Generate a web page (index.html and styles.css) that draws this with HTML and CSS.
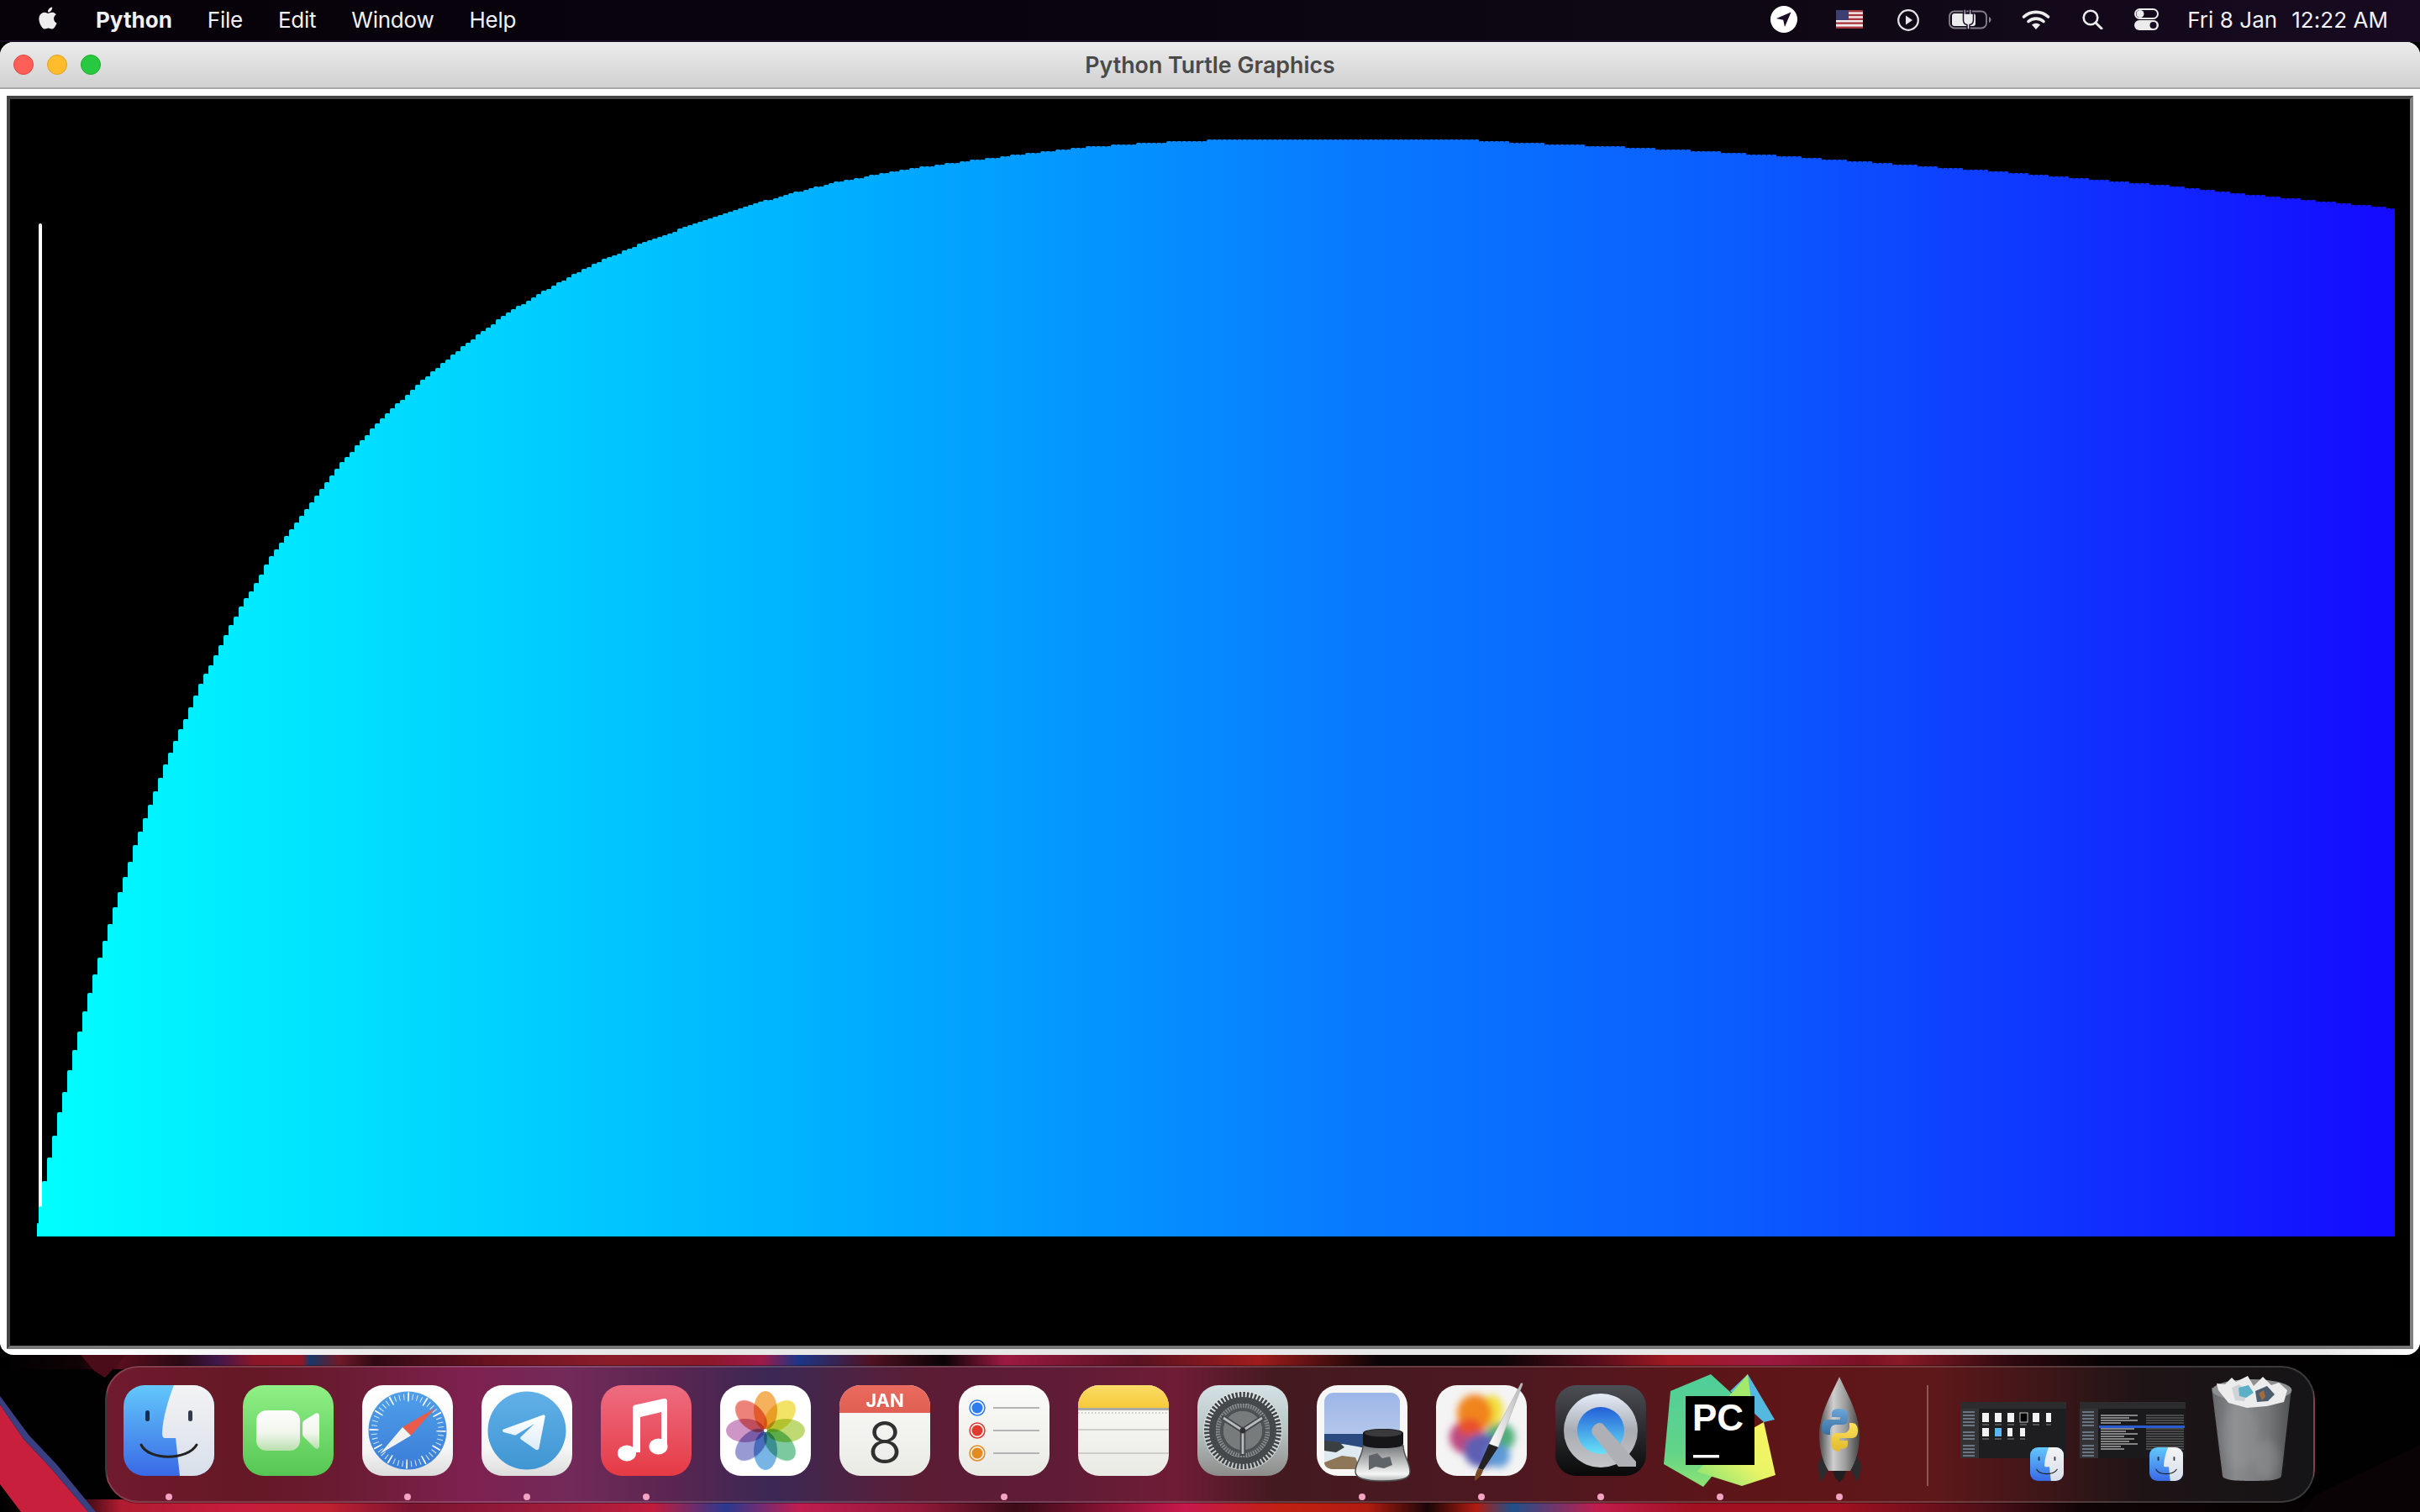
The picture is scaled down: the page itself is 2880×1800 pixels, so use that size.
FILE: index.html
```html
<!DOCTYPE html>
<html lang="en">
<head>
<meta charset="utf-8">
<title>Python Turtle Graphics</title>
<link rel="stylesheet" href="styles.css">
</head>
<body>
<svg class="defs" width="0" height="0" aria-hidden="true">
  <defs>
    <linearGradient id="gFinderL" x1="0" y1="0" x2="0" y2="1"><stop offset="0" stop-color="#63c8fb"/><stop offset="1" stop-color="#3969e6"/></linearGradient>
    <linearGradient id="gFinderR" x1="0" y1="0" x2="0" y2="1"><stop offset="0" stop-color="#f3f3f4"/><stop offset="1" stop-color="#d8dfea"/></linearGradient>
    <linearGradient id="gFT" x1="0" y1="0" x2="0" y2="1"><stop offset="0" stop-color="#90f086"/><stop offset="1" stop-color="#55c653"/></linearGradient>
    <linearGradient id="gFTw" x1="0" y1="0" x2="0" y2="1"><stop offset="0" stop-color="#fdfdfb"/><stop offset=".55" stop-color="#f2f6ee"/><stop offset="1" stop-color="#b9dfae"/></linearGradient>
    <linearGradient id="gWhite" x1="0" y1="0" x2="0" y2="1"><stop offset="0" stop-color="#ffffff"/><stop offset=".7" stop-color="#f6f6f6"/><stop offset="1" stop-color="#dcdcdc"/></linearGradient>
    <linearGradient id="gSafari" x1="0" y1="0" x2="0" y2="1"><stop offset="0" stop-color="#4f9fe9"/><stop offset="1" stop-color="#3b7dd8"/></linearGradient>
    <linearGradient id="gTg" x1="0" y1="0" x2="0" y2="1"><stop offset="0" stop-color="#62b0e8"/><stop offset="1" stop-color="#3f96d2"/></linearGradient>
    <linearGradient id="gPlane" x1="0" y1="0" x2="0" y2="1"><stop offset="0" stop-color="#ffffff"/><stop offset="1" stop-color="#dcecf8"/></linearGradient>
    <linearGradient id="gMusic" x1="0" y1="0" x2="0" y2="1"><stop offset="0" stop-color="#ee6c80"/><stop offset="1" stop-color="#e63a45"/></linearGradient>
    <linearGradient id="gCal" x1="0" y1="0" x2="0" y2="1"><stop offset="0" stop-color="#ea6c5e"/><stop offset="1" stop-color="#df5f52"/></linearGradient>
    <linearGradient id="gPaper" x1="0" y1="0" x2="0" y2="1"><stop offset="0" stop-color="#fbfbf9"/><stop offset="1" stop-color="#eaeae5"/></linearGradient>
    <linearGradient id="gNoteY" x1="0" y1="0" x2="0" y2="1"><stop offset="0" stop-color="#fbdc66"/><stop offset="1" stop-color="#f6c93a"/></linearGradient>
    <linearGradient id="gSys" x1="0" y1="0" x2="0" y2="1"><stop offset="0" stop-color="#d5e2e5"/><stop offset=".5" stop-color="#b9c3c4"/><stop offset="1" stop-color="#8c8c8a"/></linearGradient>
    <linearGradient id="gSky" x1="0" y1="0" x2="0" y2="1"><stop offset="0" stop-color="#9db6e8"/><stop offset="1" stop-color="#b4c6ea"/></linearGradient>
    <linearGradient id="gJar" x1="0" y1="0" x2="0" y2="1"><stop offset="0" stop-color="#75787a"/><stop offset=".5" stop-color="#c4c6c6"/><stop offset=".8" stop-color="#f5f5f5"/><stop offset="1" stop-color="#b5b6b7"/></linearGradient>
    <linearGradient id="gBrush" x1="0" y1="0" x2="1" y2="0"><stop offset="0" stop-color="#ffffff"/><stop offset="1" stop-color="#b8b8b8"/></linearGradient>
    <linearGradient id="gQT" x1="0" y1="0" x2="0" y2="1"><stop offset="0" stop-color="#4b4e54"/><stop offset="1" stop-color="#090909"/></linearGradient>
    <linearGradient id="gQTr" x1="0" y1="0" x2="0" y2="1"><stop offset="0" stop-color="#e4edfa"/><stop offset=".5" stop-color="#a9acb2"/><stop offset="1" stop-color="#c3c5c8"/></linearGradient>
    <linearGradient id="gQTb" x1="0" y1="0" x2="0" y2="1"><stop offset="0" stop-color="#235fd8"/><stop offset="1" stop-color="#68e3f8"/></linearGradient>
    <linearGradient id="gPyG" x1="0" y1="0" x2="0" y2="1"><stop offset="0" stop-color="#4fce9a"/><stop offset=".7" stop-color="#62d488"/><stop offset="1" stop-color="#8ee372"/></linearGradient>
    <linearGradient id="gPyY" x1="0" y1="1" x2="1" y2="0"><stop offset="0" stop-color="#7fe274"/><stop offset=".5" stop-color="#e8f468"/><stop offset="1" stop-color="#fcf45f"/></linearGradient>
    <linearGradient id="gRocket" x1="0" y1="0" x2="1" y2="0"><stop offset="0" stop-color="#4c4c4c"/><stop offset=".35" stop-color="#cfcfcf"/><stop offset=".65" stop-color="#9c9c9c"/><stop offset="1" stop-color="#454545"/></linearGradient>
    <linearGradient id="gPyB" x1="0" y1="0" x2="0" y2="1"><stop offset="0" stop-color="#6aa6d8"/><stop offset="1" stop-color="#386f9f"/></linearGradient>
    <linearGradient id="gPyO" x1="0" y1="0" x2="0" y2="1"><stop offset="0" stop-color="#ffe15c"/><stop offset="1" stop-color="#e0b92f"/></linearGradient>
    <linearGradient id="gTrash" x1="0" y1="0" x2="1" y2="0"><stop offset="0" stop-color="#66676a"/><stop offset=".3" stop-color="#898a8c"/><stop offset=".7" stop-color="#77787a"/><stop offset="1" stop-color="#505153"/></linearGradient>
    <linearGradient id="gStripT" x1="0" y1="0" x2="1" y2="0">
      <stop offset="0" stop-color="#000"/><stop offset=".033" stop-color="#100306"/><stop offset=".05" stop-color="#5a0e1c"/><stop offset=".075" stop-color="#2a0a14"/><stop offset=".09" stop-color="#40184a"/><stop offset=".105" stop-color="#8a1628"/><stop offset=".125" stop-color="#8f1828"/><stop offset=".128" stop-color="#16386a"/><stop offset=".14" stop-color="#701a28"/><stop offset=".155" stop-color="#300a14"/><stop offset=".2" stop-color="#661220"/><stop offset=".25" stop-color="#8a1c2a"/><stop offset=".29" stop-color="#8a1828"/><stop offset=".315" stop-color="#9c1a48"/><stop offset=".33" stop-color="#1c3688"/><stop offset=".36" stop-color="#501222"/><stop offset=".39" stop-color="#0a0306"/><stop offset=".415" stop-color="#9c1a42"/><stop offset=".47" stop-color="#581222"/><stop offset=".52" stop-color="#a01c1c"/><stop offset=".57" stop-color="#0a0406"/><stop offset=".62" stop-color="#0a0406"/><stop offset=".66" stop-color="#580e1c"/><stop offset=".69" stop-color="#a01a22"/><stop offset=".73" stop-color="#9c1a40"/><stop offset=".77" stop-color="#781224"/><stop offset=".785" stop-color="#881a26"/><stop offset=".83" stop-color="#300a10"/><stop offset=".87" stop-color="#060203"/><stop offset="1" stop-color="#000"/>
    </linearGradient>
    <linearGradient id="gStripB" x1="0" y1="0" x2="1" y2="0">
      <stop offset="0" stop-color="#000"/><stop offset=".035" stop-color="#3a0a14"/><stop offset=".05" stop-color="#b01c30"/><stop offset=".1" stop-color="#c81c3c"/><stop offset=".135" stop-color="#c02030"/><stop offset=".17" stop-color="#7a1430"/><stop offset=".23" stop-color="#a01c3c"/><stop offset=".27" stop-color="#c01c3c"/><stop offset=".3" stop-color="#2a3a90"/><stop offset=".33" stop-color="#c01c50"/><stop offset=".38" stop-color="#901838"/><stop offset=".42" stop-color="#3a0c18"/><stop offset=".49" stop-color="#c8184c"/><stop offset=".53" stop-color="#c02010"/><stop offset=".565" stop-color="#b01c10"/><stop offset=".59" stop-color="#1a0608"/><stop offset=".61" stop-color="#b01c10"/><stop offset=".625" stop-color="#20508a"/><stop offset=".66" stop-color="#c01c4c"/><stop offset=".7" stop-color="#a01020"/><stop offset=".76" stop-color="#a01020"/><stop offset=".82" stop-color="#501018"/><stop offset=".86" stop-color="#100406"/><stop offset="1" stop-color="#000"/>
    </linearGradient>
    <filter id="fBlob" x="-30%" y="-30%" width="160%" height="160%"><feGaussianBlur stdDeviation="4"/></filter>
    <symbol id="finderIcon" viewBox="0 0 108 108">
      <rect width="108" height="108" rx="25" fill="url(#gFinderL)"/>
      <path d="M60 0H83a25 25 0 0 1 25 25V83a25 25 0 0 1-25 25H67L62 63H50c-3 0-4-2-4-6C47 38 53 18 60 0Z" fill="url(#gFinderR)"/>
      <rect x="26" y="30" width="5" height="13" rx="2.5" fill="#1d2b45"/>
      <rect x="77" y="30" width="5" height="13" rx="2.5" fill="#333b4a"/>
      <path d="M21 71C30 90 76 90 87 71" fill="none" stroke="#222" stroke-width="3" stroke-linecap="round"/>
    </symbol>
  </defs>
</svg>

<svg class="wallpaper" viewBox="0 0 2880 1800" aria-hidden="true">
  <rect width="2880" height="1800" fill="#020102"/>
  <rect y="1610" width="2880" height="20" fill="url(#gStripT)"/>
  <rect y="1785" width="2880" height="15" fill="url(#gStripB)"/>
  <polygon points="0,1672 28,1713 60,1747 105,1800 25,1800 0,1767" fill="#c8203c"/>
  <polygon points="28,1713 60,1747 105,1800 114,1800 68,1744 34,1708 0,1662 0,1672" fill="#3a3f80"/>
  <polygon points="96,1613 150,1613 125,1640 112,1632" fill="#4a0c18"/>
  <polygon points="2755,1780 2880,1720 2880,1800 2740,1800" fill="#0a0305"/>
  <rect y="48" width="2880" height="2" fill="#1a0f25"/>
</svg>

<header class="menubar">
  <nav class="menu-left">
    <svg class="apple" viewBox="0 0 24 24"><path d="M12.152 6.896c-.948 0-2.415-1.078-3.96-1.04-2.04.027-3.91 1.183-4.961 3.014-2.117 3.675-.546 9.103 1.519 12.09 1.013 1.454 2.208 3.09 3.792 3.039 1.52-.065 2.09-.987 3.935-.987 1.831 0 2.35.987 3.96.948 1.637-.026 2.676-1.48 3.676-2.948 1.156-1.688 1.636-3.325 1.662-3.415-.039-.013-3.182-1.221-3.22-4.857-.026-3.04 2.48-4.494 2.597-4.559-1.429-2.09-3.623-2.324-4.39-2.376-2-.156-3.675 1.09-4.61 1.09zM15.53 3.83c.843-1.012 1.4-2.427 1.245-3.83-1.207.052-2.662.805-3.532 1.818-.78.896-1.454 2.338-1.273 3.714 1.338.104 2.715-.688 3.559-1.701"/></svg>
    <span class="menu-app">Python</span>
    <span class="menu-item">File</span>
    <span class="menu-item">Edit</span>
    <span class="menu-item">Window</span>
    <span class="menu-item">Help</span>
  </nav>
  <div class="menu-right">
    <svg class="st st-loc" viewBox="0 0 32 32"><circle cx="16" cy="16" r="16" fill="#fff"/><path d="M24.5 7.5 7 15l8.2 1.8L17 25z" fill="#1a0c24"/></svg>
    <svg class="st st-flag" viewBox="0 0 32 22"><rect width="32" height="22" fill="#f3ecec"/><g fill="#a8363c"><rect width="32" height="2.4" y="0"/><rect width="32" height="2.4" y="4.8"/><rect width="32" height="2.4" y="9.6"/><rect width="32" height="2.4" y="14.4"/><rect width="32" height="2.4" y="19.6"/></g><rect width="15" height="12" fill="#3d3f72"/></svg>
    <svg class="st st-play" viewBox="0 0 26 26"><circle cx="13" cy="13" r="11.8" fill="none" stroke="#e6e4e8" stroke-width="2.2"/><path d="M10 7.5v11l8-5.5z" fill="#e6e4e8"/></svg>
    <svg class="st st-batt" viewBox="0 0 51 24"><rect x="1" y="2.5" width="44" height="20" rx="6" fill="none" stroke="#85818a" stroke-width="1.8"/><path d="M48 9v7c1.5-.5 2.5-2 2.5-3.5S49.500 9.500 48 9z" fill="#85818a"/><rect x="4" y="5" width="28" height="15" rx="3" fill="#ececec"/><path d="M18 0h2.500v5h4V0H27v5h2.500v8c0 3-2 5-4.500 5.500V24h-3v-5.500C19.500 18 17.500 16 17.500 13V5H18z" fill="#ececec" stroke="#1a0c24" stroke-width="1.500"/></svg>
    <svg class="st st-wifi" viewBox="0 0 34 24"><g fill="none" stroke="#ececec" stroke-width="3.600" stroke-linecap="round"><path d="M2.500 9C10.500 1.500 23.500 1.500 31.500 9"/><path d="M8 14.500c5-4.500 13-4.500 18 0"/></g><path d="M17 24l-5-5.500c3-2.500 7-2.500 10 0z" fill="#ececec"/></svg>
    <svg class="st st-search" viewBox="0 0 25 24"><circle cx="10" cy="10" r="8.300" fill="none" stroke="#ececec" stroke-width="2.600"/><path d="M16 16l7 7" stroke="#ececec" stroke-width="3" stroke-linecap="round"/></svg>
    <svg class="st st-cc" viewBox="0 0 29 26"><rect x="1" y="1" width="27" height="11" rx="5.500" fill="none" stroke="#ececec" stroke-width="2"/><circle cx="7" cy="6.500" r="4.500" fill="#ececec"/><rect y="14" width="29" height="12" rx="6" fill="#ececec"/><circle cx="22.500" cy="20" r="4" fill="#1a0c24"/></svg>
    <span class="clock clock-date">Fri 8 Jan</span>
    <span class="clock clock-time">12:22 AM</span>
  </div>
</header>

<main class="desktop">
  <section class="window">
    <div class="titlebar">
      <div class="lights">
        <i class="light light-close"></i><i class="light light-min"></i><i class="light light-max"></i>
      </div>
      <h1 class="title">Python Turtle Graphics</h1>
      <span></span>
    </div>
    <div class="content">
      <div class="sunken"><canvas id="turtle" class="turtle" width="2856" height="1484"></canvas></div>
    </div>
  </section>

  <footer class="dock">
    <div class="app">
      <svg class="icon" viewBox="0 0 108 108"><use href="#finderIcon"/></svg><i class="dot on"></i>
    </div>
    <div class="app">
      <svg class="icon" viewBox="0 0 108 108">
        <rect width="108" height="108" rx="25" fill="url(#gFT)"/>
        <rect x="16" y="30" width="52" height="48" rx="12" fill="url(#gFTw)"/>
        <path d="M71 46c0-2 1-3 2-4l13-8c3-2 5 0 5 3v35c0 3-2 5-5 3L73 62c-1-1-2-2-2-4z" fill="url(#gFTw)"/>
      </svg><i class="dot"></i>
    </div>
    <div class="app">
      <svg class="icon" viewBox="0 0 108 108">
        <rect width="108" height="108" rx="25" fill="url(#gWhite)"/>
        <circle cx="54" cy="54" r="46.500" fill="url(#gSafari)"/>
        <circle cx="54" cy="54" r="40" fill="none" stroke="#dcebfa" stroke-width="7" stroke-dasharray="1 4.240"/>
        <circle cx="54" cy="54" r="40" fill="none" stroke="#fff" stroke-width="11" stroke-dasharray="1.600 19.340"/>
        <polygon points="87,27 48,50 58,60" fill="#e95b4a"/>
        <polygon points="21,82 48,50 58,60" fill="#f2f2f2"/>
      </svg><i class="dot on"></i>
    </div>
    <div class="app">
      <svg class="icon" viewBox="0 0 108 108">
        <rect width="108" height="108" rx="25" fill="url(#gWhite)"/>
        <circle cx="54" cy="54" r="46.500" fill="url(#gTg)"/>
        <path d="M73 35.500c1.500-.6 3 .5 2.700 2.200L68.500 75c-.4 2-2.500 2.800-4 1.700L47 64.500c-1-.8-1-1.800-.2-2.700L63 46 41.500 59c-1 .6-2 .7-3 .3L26.500 56c-1.800-.6-2-2.600-.2-3.400z" fill="url(#gPlane)"/>
      </svg><i class="dot on"></i>
    </div>
    <div class="app">
      <svg class="icon" viewBox="0 0 108 108">
        <rect width="108" height="108" rx="25" fill="url(#gMusic)"/>
        <path d="M38 27c0-2 1-3 3-3.500L75 16c2.500-.5 4 .5 4 3V72H72V32L47 38V80H38z" fill="#fff"/>
        <ellipse cx="31" cy="81" rx="11" ry="9.500" fill="#fff"/>
        <ellipse cx="68.500" cy="73" rx="11" ry="9.500" fill="#fff"/>
      </svg><i class="dot on"></i>
    </div>
    <div class="app">
      <svg class="icon" viewBox="0 0 108 108">
        <rect width="108" height="108" rx="25" fill="#fff"/>
        <g class="petals">
          <ellipse cx="54" cy="30" rx="14" ry="23" fill="#f3a33d"/>
          <ellipse cx="54" cy="30" rx="14" ry="23" fill="#f0de4b" transform="rotate(45 54 54)"/>
          <ellipse cx="54" cy="30" rx="14" ry="23" fill="#b3d45a" transform="rotate(90 54 54)"/>
          <ellipse cx="54" cy="30" rx="14" ry="23" fill="#64bf8e" transform="rotate(135 54 54)"/>
          <ellipse cx="54" cy="30" rx="14" ry="23" fill="#5fa8df" transform="rotate(180 54 54)"/>
          <ellipse cx="54" cy="30" rx="14" ry="23" fill="#8588cb" transform="rotate(225 54 54)"/>
          <ellipse cx="54" cy="30" rx="14" ry="23" fill="#c483bd" transform="rotate(270 54 54)"/>
          <ellipse cx="54" cy="30" rx="14" ry="23" fill="#ea6c60" transform="rotate(315 54 54)"/>
        </g>
        <circle cx="54" cy="54" r="2" fill="#fff"/>
      </svg><i class="dot"></i>
    </div>
    <div class="app">
      <svg class="icon" viewBox="0 0 108 108">
        <rect width="108" height="108" rx="25" fill="url(#gPaper)"/>
        <path d="M0 33V25A25 25 0 0 1 25 0H83a25 25 0 0 1 25 25V33z" fill="url(#gCal)"/>
        <text x="54" y="26" class="cal-month">JAN</text>
        <text x="54" y="93" class="cal-day">8</text>
      </svg><i class="dot"></i>
    </div>
    <div class="app">
      <svg class="icon" viewBox="0 0 108 108">
        <rect width="108" height="108" rx="25" fill="url(#gPaper)"/>
        <circle cx="22" cy="27" r="6.500" fill="#2f7bf0"/><circle cx="22" cy="27" r="9" fill="none" stroke="#2f7bf0" stroke-width="1.500"/>
        <circle cx="22" cy="54" r="6.500" fill="#e0392f"/><circle cx="22" cy="54" r="9" fill="none" stroke="#e0392f" stroke-width="1.500"/>
        <circle cx="22" cy="81" r="6.500" fill="#e38b1f"/><circle cx="22" cy="81" r="9" fill="none" stroke="#e38b1f" stroke-width="1.500"/>
        <path d="M41 27H96M41 54H96M41 81H96" stroke="#b4b4b4" stroke-width="2"/>
      </svg><i class="dot on"></i>
    </div>
    <div class="app">
      <svg class="icon" viewBox="0 0 108 108">
        <rect width="108" height="108" rx="25" fill="url(#gPaper)"/>
        <path d="M0 27V25A25 25 0 0 1 25 0H83a25 25 0 0 1 25 25V27z" fill="url(#gNoteY)"/>
        <rect y="27" width="108" height="3" fill="#a9a9a5"/>
        <path d="M0 33H108" stroke="#bdbdb8" stroke-width="1.500" stroke-dasharray="1.500 2.500"/>
        <path d="M0 53H108M0 81H108" stroke="#cfcfca" stroke-width="1.800"/>
      </svg><i class="dot"></i>
    </div>
    <div class="app">
      <svg class="icon" viewBox="0 0 108 108">
        <rect width="108" height="108" rx="25" fill="url(#gSys)"/>
        <circle cx="54" cy="54" r="47" fill="#e4e8e8" opacity=".6"/>
        <circle cx="54" cy="54" r="40" fill="none" stroke="#3e4244" stroke-width="12" stroke-dasharray="2.300 1.890"/>
        <circle cx="54" cy="54" r="36" fill="none" stroke="#45494b" stroke-width="8"/>
        <circle cx="54" cy="54" r="32" fill="#8a8e8f"/>
        <circle cx="54" cy="54" r="29" fill="none" stroke="#4f5355" stroke-width="6" stroke-dasharray="1.500 1.500"/>
        <circle cx="54" cy="54" r="25" fill="none" stroke="#4d5153" stroke-width="4"/>
        <circle cx="54" cy="54" r="23" fill="#777b7c"/>
        <path d="M54 54 54 84M54 54 29 38M54 54 79 38" stroke="#45484a" stroke-width="6.500"/>
        <path d="M54 54 54 82M54 54 31 39M54 54 77 39" stroke="#b9bcbc" stroke-width="2.800"/>
        <circle cx="54" cy="54" r="3.500" fill="#2f3133"/>
      </svg><i class="dot"></i>
    </div>
    <div class="app">
      <svg class="icon" viewBox="0 0 108 108">
        <rect width="108" height="108" rx="25" fill="#f7f7f5"/>
        <path d="M9 20A11 11 0 0 1 20 9H88A11 11 0 0 1 99 20V58H9z" fill="url(#gSky)"/>
        <path d="M9 58H99V90A11 11 0 0 1 88 100H20A11 11 0 0 1 9 90z" fill="#2b4a80"/>
        <path d="M9 72c15-6 30 0 60 5l30 3v12H9z" fill="#dfeaf0"/>
        <path d="M9 66l18 2 6 6-10 6-14-2z" fill="#3c3f42"/>
        <path d="M9 92 30 84l16 2 6 14H20c-6 0-11-3-11-8z" fill="#8f7658"/>
        <path d="M55 72h48c0 12 8 20 8 31 0 8-10 11-32 11s-33-3-33-11c0-11 9-19 9-31z" fill="url(#gJar)" stroke="#4d4f51" stroke-width="1.400"/>
        <path d="M62 84l10-3 6 6 9-2 3 10-10 4-10-2-8 4z" fill="#5f6468"/>
        <path d="M55 57c0-3 10-5 24-5s24 2 24 5V70c0 3-10 5-24 5s-24-2-24-5z" fill="#161618"/>
        <ellipse cx="79" cy="57" rx="22" ry="4.500" fill="#3a3a3c"/>
      </svg><i class="dot on"></i>
    </div>
    <div class="app">
      <svg class="icon" viewBox="0 0 108 108">
        <rect width="108" height="108" rx="25" fill="#f4f4f4"/>
        <g filter="url(#fBlob)">
          <ellipse cx="37" cy="62" rx="21" ry="20" fill="#bc4a80"/>
          <ellipse cx="76" cy="62" rx="18" ry="17" fill="#4fae78"/>
          <ellipse cx="55" cy="78" rx="22" ry="20" fill="#5d5fb3"/>
          <ellipse cx="74" cy="84" rx="14" ry="14" fill="#5f9ad6"/>
          <ellipse cx="66" cy="30" rx="14" ry="18" fill="#f2e03e"/>
          <ellipse cx="46" cy="34" rx="21" ry="23" fill="#f1841a"/>
          <ellipse cx="40" cy="50" rx="14" ry="10" fill="#e8502c"/>
        </g>
        <path d="M100 0c1-3 3-3 3-1L74 74 63 70z" fill="url(#gBrush)" stroke="#b0b0b0" stroke-width=".6"/>
        <path d="M63 70l11 4-18 27-6-2z" fill="#222224"/>
        <path d="M50 99l6 2c-1 5-4 9-10 13 0-5 1-10 4-15z" fill="#7a4a26"/>
      </svg><i class="dot on"></i>
    </div>
    <div class="app">
      <svg class="icon" viewBox="0 0 108 108">
        <rect width="108" height="108" rx="25" fill="url(#gQT)"/>
        <circle cx="54" cy="54" r="44" fill="url(#gQTr)"/>
        <circle cx="54" cy="54" r="28" fill="url(#gQTb)"/>
        <path d="M44 58c-2-4 0-9 5-12 4-2 7-1 9 2l38 43v6H75z" fill="#aeb0b5"/>
      </svg><i class="dot on"></i>
    </div>
    <div class="app">
      <svg class="icon" viewBox="0 0 108 108">
        <polygon points="87,-13 66,7 106,44 119,41 103,14" fill="#55b9df"/>
        <polygon points="43,-13 -5,7 -13,94 34,121 60,90 90,30" fill="url(#gPyG)"/>
        <polygon points="87,-13 50,30 94,42" fill="#a3e96c"/>
        <polygon points="106,44 120,107 80,120 26,103 60,70" fill="url(#gPyY)"/>
        <rect x="13" y="13" width="82" height="82"/>
        <text x="21" y="54" class="pc-text">PC</text>
        <rect x="22" y="83" width="31" height="3.500" fill="#fff"/>
      </svg><i class="dot on"></i>
    </div>
    <div class="app">
      <svg class="icon" viewBox="0 0 108 108">
        <path d="M34 80 28 96l4 20 8-14z" fill="#2c2c2e"/>
        <path d="M74 80l6 16-4 20-8-14z" fill="#2c2c2e"/>
        <path d="M54-10C46 8 30 34 30 60c0 16 4 30 11 42h26c7-12 11-26 11-42C78 34 62 8 54-10z" fill="url(#gRocket)"/>
        <path d="M54 28c-8 0-9 3-9 7v3h10v3H40c-5 0-7 4-7 9s2 9 7 9h3v-5c0-4 3-7 7-7h8c4 0 6-3 6-6V35c0-4-3-7-10-7z" fill="url(#gPyB)"/>
        <path d="M55 76c8 0 9-3 9-7v-3H54v-3h15c5 0 7-4 7-9s-2-9-7-9h-3v5c0 4-3 7-7 7h-8c-4 0-6 3-6 6v9c0 4 3 7 10 7z" fill="url(#gPyO)"/>
        <path d="M46 102h16l-3 8-5 6-5-6z" fill="#1f1f21"/>
      </svg><i class="dot on"></i>
    </div>
    <div class="dock-sep"></div>
    <div class="app">
      <svg class="icon" viewBox="0 0 108 108">
        <rect x="-9" y="20" width="126" height="67" rx="2" fill="#1e1e20"/>
        <rect x="-9" y="20" width="22" height="67" fill="#333335"/>
        <rect x="-9" y="20" width="126" height="8" fill="#2c2c2e"/>
        <path d="M-6 32H8M-6 36H8M-6 40H8M-6 44H8M-6 48H8M-6 56H8M-6 60H8M-6 64H8M-6 72H8M-6 76H8M-6 80H8M-6 84H8" stroke="#7f8a9a" stroke-width="1.300"/>
        <g fill="#f2f2f2"><rect x="17" y="33" width="8" height="11"/><rect x="32" y="33" width="8" height="11"/><rect x="47" y="33" width="8" height="11"/><rect x="77" y="33" width="8" height="11"/><rect x="93" y="33" width="6" height="11"/><rect x="17" y="51" width="8" height="10"/><rect x="47" y="51" width="6" height="10"/><rect x="62" y="51" width="6" height="10"/></g>
        <rect x="32" y="51" width="8" height="10" fill="#5ab6ee"/>
        <rect x="62" y="33" width="9" height="11" stroke="#ccc" fill="#000"/>
        <path d="M17 47H25M32 47H40M47 47H55M62 47H70M77 47H85M93 47H99M17 64H25M32 64H40M47 64H55M62 64H68" stroke="#888" stroke-width="1.200"/>
        <svg x="74" y="74" width="40" height="40" viewBox="0 0 108 108"><use href="#finderIcon"/></svg>
      </svg><i class="dot"></i>
    </div>
    <div class="app">
      <svg class="icon" viewBox="0 0 108 108">
        <rect x="-9" y="20" width="126" height="67" rx="2" fill="#1a1a1c"/>
        <rect x="-9" y="20" width="22" height="67" fill="#333335"/>
        <rect x="-9" y="20" width="126" height="8" fill="#2c2c2e"/>
        <path d="M-6 32H8M-6 36H8M-6 40H8M-6 44H8M-6 48H8M-6 56H8M-6 60H8M-6 64H8M-6 72H8M-6 76H8M-6 80H8M-6 84H8" stroke="#7f8a9a" stroke-width="1.300"/>
        <path d="M16 36H60M16 39H50M16 42H60M16 45H40M16 52H56M16 55H46M16 58H60M16 61H44M16 64H56M16 67H50M16 70H60M16 73H40M16 76H44" stroke="#a8a8a8" stroke-width="1.300"/>
        <path d="M70 36H115M70 39H115M70 42H115M70 45H115M70 52H115M70 55H115M70 58H115M70 61H115M70 64H115M70 67H115M70 70H115M70 73H115M70 76H115" stroke="#5a5a5a" stroke-width="1.300"/>
        <rect x="14" y="48" width="102" height="3" fill="#2a5bd0"/>
        <svg x="74" y="74" width="40" height="40" viewBox="0 0 108 108"><use href="#finderIcon"/></svg>
      </svg><i class="dot"></i>
    </div>
    <div class="app">
      <svg class="icon" viewBox="0 0 108 108">
        <path d="M6 3 19 108c1 5 15 6 35 6s34-1 35-6L101 3z" fill="url(#gTrash)"/>
        <ellipse cx="40" cy="60" rx="22" ry="40" fill="#a5a6a7" opacity=".25" filter="url(#fBlob)"/>
        <ellipse cx="72" cy="88" rx="16" ry="22" fill="#b5b6b7" opacity=".2" filter="url(#fBlob)"/>
        <ellipse cx="54" cy="6" rx="47.500" ry="13" fill="#8e8f91"/>
        <path d="M14 6 12-2l10 1 8-8 5 5 14-7 7 12 11-11 10 10 9-3 10 9-4 14-20 5-24 2-22-6z" fill="#ececec"/>
        <path d="M30 3l9-4 10 9-4 11-11-1z" fill="#cfd3d6"/>
        <path d="M38 3l12-3 6 9-9 6-8-2z" fill="#5bb0c7"/>
        <path d="M58 7l14-6 9 10-8 8-13 1z" fill="#495d6e"/>
        <path d="M62 10l6-4 2 8-4 4z" fill="#a56a3a"/>
      </svg><i class="dot"></i>
    </div>
  </footer>
</main>
<script src="script.js"></script>
</body>
</html>
```
FILE: styles.css
```css
* { box-sizing: border-box; }
html, body { margin: 0; padding: 0; width: 2880px; height: 1800px; overflow: hidden; }
body { position: relative; background: #000; font-family: Inter, "Liberation Sans", sans-serif; }

.defs { position: absolute; }
.wallpaper { position: absolute; left: 0; top: 0; width: 2880px; height: 1800px; }

.menubar {
  position: relative;
  height: 50px;
  padding: 0 38px 2px 44px;
  display: flex;
  align-items: center;
  justify-content: space-between;
  color: #f1f0f2;
  font-size: 26px;
  background: linear-gradient(90deg, #07020a 0%, #08030c 40%, #0e0812 70%, #170a21 100%);
  border-bottom: 2px solid transparent;
  background-clip: padding-box;
}
.menu-left { display: flex; align-items: center; gap: 42px; }
.apple { width: 26px; height: 31px; fill: #eeeeee; margin-top: -3px; margin-right: 2px; }
.menu-app { font-weight: 700; }
.menu-item { font-weight: 400; letter-spacing: -0.25px; }

.menu-right { display: flex; align-items: center; }
.st { display: block; flex: none; }
.st-loc { width: 32px; height: 32px; }
.st-flag { width: 32px; height: 22px; margin-left: 46px; }
.st-play { width: 26px; height: 26px; margin-left: 41px; margin-top: 2px; }
.st-batt { width: 51px; height: 24px; margin-left: 35px; }
.st-wifi { width: 34px; height: 24px; margin-left: 36px; }
.st-search { width: 25px; height: 24px; margin-left: 38px; }
.st-cc { width: 29px; height: 26px; margin-left: 37px; }
.clock { white-space: nowrap; letter-spacing: 0.05px; }
.clock-date { margin-left: 34px; }
.clock-time { margin-left: 17px; }

.desktop { position: relative; display: flex; flex-direction: column; align-items: center; }

.window {
  width: 2880px;
  height: 1563px;
  border-radius: 16px;
  overflow: hidden;
  background: linear-gradient(90deg, #fff 0, #fff 3%, #e8e8e8 18%, #e8e8e8 96%, #fff 100%);
  display: flex;
  flex-direction: column;
}
.titlebar {
  flex: none;
  height: 56px;
  display: grid;
  grid-template-columns: 1fr auto 1fr;
  align-items: center;
  background: linear-gradient(180deg, #ececec 0%, #d1d1d1 100%);
  border-bottom: 2px solid #a8a8a8;
}
.lights { display: flex; gap: 16px; padding-left: 16px; }
.light { display: block; width: 24px; height: 24px; border-radius: 50%; border: 1px solid; }
.light-close { background: #ff5f57; border-color: #e0443e; }
.light-min { background: #ffbd2e; border-color: #dea123; }
.light-max { background: #28c940; border-color: #1aab29; }
.title { margin: 0; font-size: 26.8px; font-weight: 600; color: #4a4a4a; line-height: 1; }

.content {
  flex: 1;
  padding: 8px 8px 0;
  background: linear-gradient(180deg, #fff 0, #fff 100%) top / 100% 1500px no-repeat;
}
.sunken {
  width: 2864px;
  height: 1492px;
  border: 4px solid;
  border-color: #444444 #808080 #777777 #444444;
}
.turtle { display: block; width: 2856px; height: 1484px; background: #000; }

.dock {
  margin-top: 13px;
  width: 2630px;
  height: 163px;
  padding: 21px 20px 0;
  display: flex;
  gap: 34px;
  border: 2px solid rgba(255, 255, 255, 0.16);
  border-radius: 40px;
  box-shadow: 0 0 0 1px rgba(0, 0, 0, 0.35);
  background: linear-gradient(90deg, #701a2e 0%, #651825 6.6%, #6c1c34 11.2%, #7e2150 16.5%, #722a5a 21%, #5a2550 25.6%, #3b2854 30.2%, #4a2446 33%, #5c1c34 37%, #5e1c36 42.8%, #701c36 48.5%, #431a20 53%, #4e1820 63.7%, #5e1518 75%, #5f181a 82.7%, #3a1618 88.4%, #1e1416 92.2%, #151416 100%);
}
.app { flex: none; width: 108px; display: flex; flex-direction: column; align-items: center; }
.icon { display: block; width: 108px; height: 108px; overflow: visible; }
.dot { display: block; width: 8px; height: 8px; margin-top: 21px; border-radius: 50%; background: transparent; }
.dot.on { background: #f3a3c4; }
.dock-sep {
  flex: none;
  width: 2px;
  height: 120px;
  margin: 0 13px 0 16px;
  background: rgba(255, 255, 255, 0.28);
}

.petals ellipse { opacity: 0.85; mix-blend-mode: multiply; }
.cal-month { font: 700 22px Inter, "Liberation Sans", sans-serif; fill: #fff; text-anchor: middle; }
.cal-day { font: 300 68px Inter, "Liberation Sans", sans-serif; fill: #303030; text-anchor: middle; }
.pc-text { font: 700 44px "Liberation Sans", sans-serif; fill: #fff; }
```
FILE: script.js
```js
// Draws the turtle's strokes: one vertical pen stroke per step along the curve.
var canvas = document.getElementById('turtle');
var ctx = canvas.getContext('2d');
ctx.translate(-12, -118);

var curve = [
  [44,1456],[46,1436],[50,1405],[56,1377],[62,1351],[68,1324],[78,1283],[84,1258],[90,1235],[96,1211],
  [106,1175],[112,1153],[118,1133],[124,1113],[134,1079],[140,1061],[146,1043],[152,1025],[162,994],
  [168,979],[174,963],[180,947],[190,920],[196,904],[202,891],[208,877],[218,855],[224,841],[230,828],
  [236,814],[246,795],[252,783],[258,771],[264,759],[274,741],[280,729],[286,719],[292,709],[300,697],
  [320,662],[344,629],[373,591],[400,555],[445,505],[500,452],[550,411],[600,373],[650,343],[700,316],
  [750,294],[800,275],[850,257],[900,241],[950,227],[1000,215],[1050,206],[1100,198],[1200,185],[1300,174],
  [1400,168],[1465,166],[1740,166],[1810,170],[1910,174],[2030,180],[2125,186],[2210,192],[2290,198],
  [2390,205],[2485,213],[2568,220],[2700,234],[2850,248]
];

function topAt(x) {
  for (var i = 1; i < curve.length; i++) {
    if (x <= curve[i][0]) {
      var a = curve[i - 1], b = curve[i];
      return a[1] + (b[1] - a[1]) * (x - a[0]) / (b[0] - a[0]);
    }
  }
  return curve[curve.length - 1][1];
}

var grad = ctx.createLinearGradient(44, 0, 2850, 0);
grad.addColorStop(0, 'rgb(0,255,255)');
grad.addColorStop(0.37, 'rgb(0,168,255)');
grad.addColorStop(0.556, 'rgb(8,122,255)');
grad.addColorStop(0.71, 'rgb(10,95,255)');
grad.addColorStop(1, 'rgb(20,10,255)');

ctx.fillStyle = '#fff';
ctx.beginPath();
ctx.roundRect(46, 266, 4, 1180, 2);
ctx.fill();

function bar(x, w) {
  var y = Math.round(topAt(x) / 2) * 2;
  ctx.beginPath();
  ctx.roundRect(x, y, w, 1472 - y, [2, 2, 0, 0]);
  ctx.fill();
}
ctx.fillStyle = grad;
bar(44, 2);
bar(46, 4);
for (var x = 50; x < 2850; x += 6) {
  bar(x, Math.min(6.5, 2850 - x));
}
```
